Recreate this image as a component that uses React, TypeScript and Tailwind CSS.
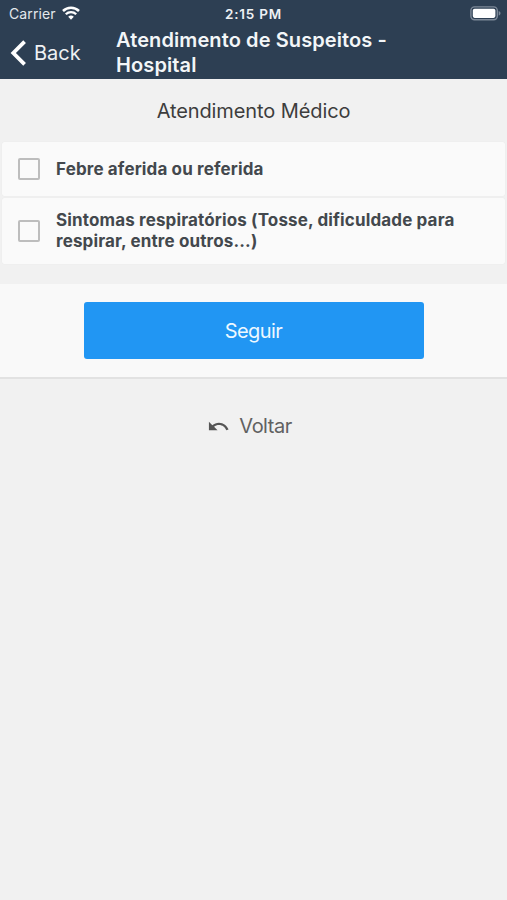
import React from "react";

function Wifi() {
  return (
    <svg className="ml-[6px] h-[15px] w-[18px]" viewBox="0 0 18 15" fill="none" stroke="#fff">
      <path d="M1 5a11.4 11.4 0 0 1 16 0" strokeWidth="2.5" />
      <path d="M3.8 8.2a7.4 7.4 0 0 1 10.4 0" strokeWidth="2.3" />
      <path d="M9 13.8 6.2 10.8a4 4 0 0 1 5.6 0Z" fill="#fff" stroke="none" />
    </svg>
  );
}

function Battery() {
  return (
    <svg className="-mt-[2px] h-[15px] w-[31px]" viewBox="0 0 31 15" fill="none">
      <rect x="0.9" y="0.9" width="26.4" height="12.8" rx="3.6" stroke="#7d8998" strokeWidth="1.4" />
      <rect x="2.8" y="2.7" width="22.6" height="9.2" rx="1.8" fill="#fff" />
      <path d="M28.7 5c2.4.8 2.4 3.8 0 4.6Z" fill="#7d8998" />
    </svg>
  );
}

function Option({ className, children }: { className: string; children: React.ReactNode }) {
  return (
    <label className={`flex items-center rounded-[2px] bg-[#fafafa] pl-4 shadow-[0_0_1px_rgba(0,0,0,0.08)] ${className}`}>
      <span className="size-[22px] shrink-0 rounded-[2px] border-2 border-[#bdbdbd]" />
      <span className="ml-[16px] whitespace-nowrap text-[17px] leading-[21px] font-bold tracking-[0.14px] text-[#43484d]">
        {children}
      </span>
    </label>
  );
}

export default function App() {
  return (
    <div className="flex h-[900px] w-[507px] flex-col overflow-hidden bg-[#f1f1f1] font-['Inter','Liberation_Sans',sans-serif]">
      <header className="h-[79px] shrink-0 bg-[#2d3f53] text-white">
        <div className="grid h-[28px] grid-cols-3 items-center">
          <div className="-mt-[2px] flex items-center pl-[9px] text-[14px] tracking-[0.12px] text-[#e4e8ec]">
            <span className="w-[47px] whitespace-nowrap">Carrier</span>
            <Wifi />
          </div>
          <span className="text-center text-[13.5px] font-semibold tracking-[0.8px] text-[#eef1f4]">2:15 PM</span>
          <div className="flex justify-end pr-[6px]">
            <Battery />
          </div>
        </div>
        <div className="flex h-[51px]">
          <div className="flex w-[116px] items-center pb-[2px] pl-[10px]">
            <svg className="h-[28px] w-[17px]" viewBox="0 0 17 28" fill="none" stroke="#fff" strokeWidth="3.8">
              <path d="M14.6 2.6 3.3 14l11.3 11.4" />
            </svg>
            <span className="ml-[7px] text-[20px] text-[#eef1f4]">Back</span>
          </div>
          <h1 className="whitespace-nowrap text-[20px] leading-[24.5px] font-semibold tracking-[0.1px] text-[#f3f6f8]">
            Atendimento de Suspeitos -<br />Hospital
          </h1>
        </div>
      </header>

      <h2 className="flex h-[63px] items-center justify-center text-[20px] tracking-[-0.1px] text-[#3d3d3d]">
        Atendimento Médico
      </h2>

      <div className="flex flex-col gap-[2px] px-[2px]">
        <Option className="h-[54px]">Febre aferida ou referida</Option>
        <Option className="h-[66px]">
          Sintomas respiratórios (Tosse, dificuldade para<br />respirar, entre outros...)
        </Option>
      </div>

      <div className="mt-[20px] flex h-[95px] justify-center border-b-2 border-[#e2e2e2] bg-[#f9f9f9] pt-[18px]">
        <button className="h-[57px] w-[340px] rounded-[3px] bg-[#2196f3] pt-px text-[20px] tracking-[-0.6px] text-[#edf8ff]">
          Seguir
        </button>
      </div>

      <button className="mt-[32px] flex h-[30px] items-center justify-center pr-[8px] text-[20px] tracking-[-0.5px] text-[#616161]">
        <svg className="mr-[9px] size-[23px]" viewBox="0 0 24 24" fill="#555">
          <path d="M12.5 8c-2.65 0-5.05.99-6.9 2.6L2 7v9h9l-3.62-3.62c1.39-1.16 3.16-1.88 5.12-1.88 3.54 0 6.55 2.31 7.6 5.5l2.37-.78C21.08 11.03 17.15 8 12.5 8z" />
        </svg>
        Voltar
      </button>
    </div>
  );
}
